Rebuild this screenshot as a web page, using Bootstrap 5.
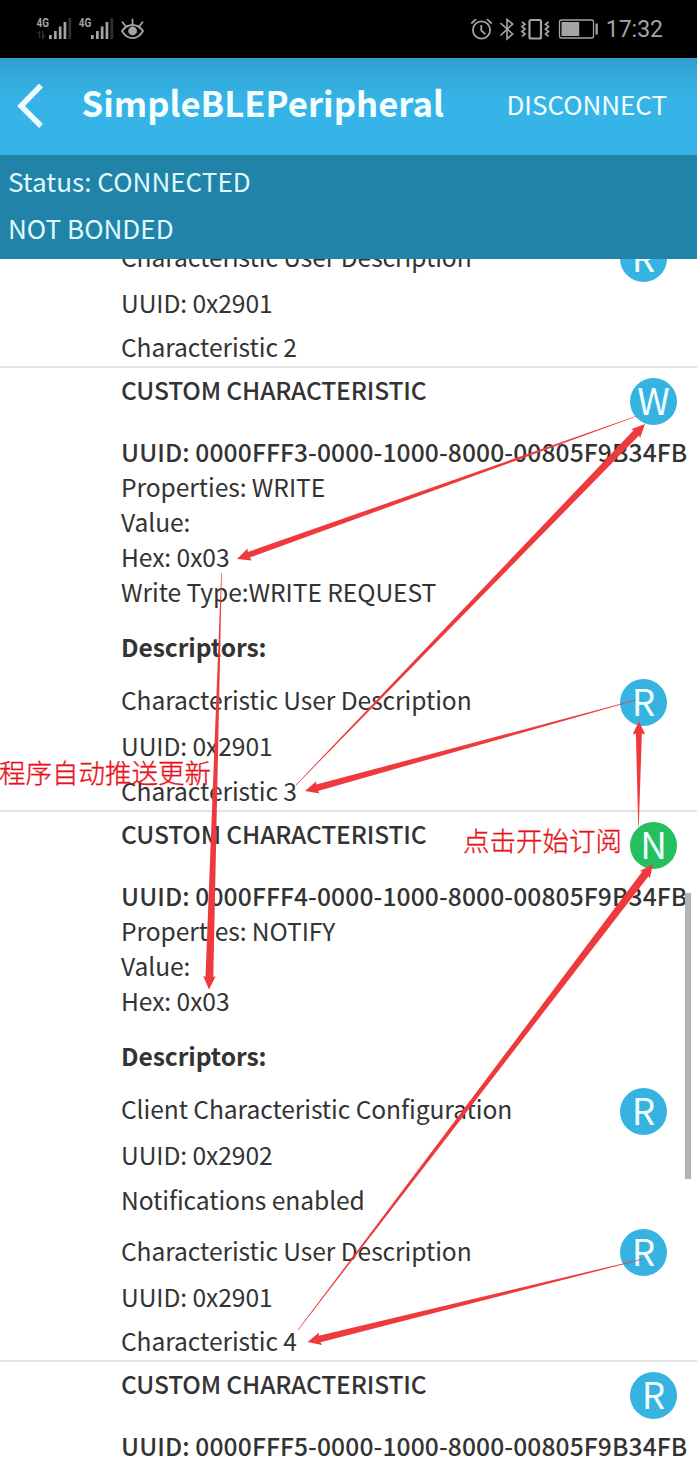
<!DOCTYPE html>
<html lang="en">
<head>
<meta charset="utf-8">
<meta name="viewport" content="width=device-width, initial-scale=1">
<title>SimpleBLEPeripheral</title>
<link href="https://cdn.jsdelivr.net/npm/bootstrap@5.3.0/dist/css/bootstrap.min.css" rel="stylesheet">
<style>
  body { font-family: "Noto Sans CJK SC", "Noto Sans", sans-serif; background: #fff; color: #333; font-size: 24.6px; line-height: 35px; }
  .screen { width: 697px; height: 1471px; }
  .sysbar { height: 57.5px; background: #000; padding: 2px 34px 0 34px; color: #a4a4a4; }
  .clock { font-family: Roboto, sans-serif; font-size: 23px; line-height: 58px; }
  .appbar { height: 97px; background: linear-gradient(#329fce, #33a9da 18%, #36b4e8 45%); color: #f4ffff; padding: 0 30px 4px 17px; }
  .app-title { font-size: 34.7px; font-weight: 700; margin-left: 38.5px; padding-bottom: 3px; }
  .app-action { font-size: 26px; padding-bottom: 2px; }
  .status-panel { height: 104.5px; background: #2283a8; color: #dffaff; padding: 3.5px 8px 0; font-size: 26.1px; line-height: 47.3px; }
  .gatt { padding-left: 121px; letter-spacing: -.07px; }
  .gatt-first { margin-top: -20.2px; }
  .section-rule { border-top: 2px solid #e2e2e2; margin-left: -121px; }
  .medium { font-weight: 500; letter-spacing: -.16px; }
  .uuid { letter-spacing: .11px; }
  .dot { width: 47px; height: 47px; border-radius: 50%; background: #36b3e0; color: #f0fdff; font-size: 37px; line-height: 42px; margin: -3.5px 30px -8.5px 0; }
  .dot-main { margin: 6px 20px -18px 0; }
  .dot-green { background: #26bf60; }
  .gap-title { margin-top: 4px; }
  .gap-uuid { margin-top: 27.3px; }
  .gap-desc { margin-top: 19.8px; }
  .gap-first { margin-top: 18.4px; }
  .gap-next { margin-top: 16.3px; }
  .gap-line { margin-top: 10.8px; }
  .gap-value { margin-top: 9.6px; }
  .section-end { height: 1.8px; }
  .overlay-note { color: #e8121a; font-size: 26.5px; line-height: 38px; font-weight: 300; -webkit-text-stroke: .35px #e8121a; }
  .note-push { left: -1px; top: 753px; }
  .note-subscribe { left: 463px; top: 821px; }
  .scroll-thumb { left: 685px; top: 893px; width: 6px; height: 286px; background: #b3b3b4; }
</style>
</head>
<body>
<div class="screen position-relative overflow-hidden d-flex flex-column">
  <div class="sysbar d-flex align-items-center justify-content-between flex-shrink-0">
    <svg width="114" height="30" viewBox="34 15 114 30" fill="#a4a4a4">
      <g font-family="Roboto, sans-serif" font-size="12.5" font-weight="700">
        <text x="36.5" y="27" textLength="12.5" lengthAdjust="spacingAndGlyphs">4G</text>
        <text x="78.7" y="27" textLength="12.5" lengthAdjust="spacingAndGlyphs">4G</text>
      </g>
      <path d="M49 35h2.7v4H49zM54 31h2.7v8H54zM58.8 26.5h2.7V39h-2.7zM63.6 22h2.7v17h-2.7z"/>
      <path d="M91 35h2.7v4H91zM96 31h2.7v8H96zM100.8 26.5h2.7V39h-2.7zM105.6 22h2.7v17h-2.7z"/>
      <path fill="#303030" d="M68.5 18h2.7v21h-2.7zM110.5 18h2.7v21h-2.7zM37 34l2.3-3 1 0v7h-1.5v-4zM42 31h1.5v4h2.3l-2.8 4h-1z"/>
      <path fill="none" stroke="#a4a4a4" stroke-width="1.8" stroke-linecap="round" d="M122 31c5.5-8 15.5-8 21 0c-5.5 9.5-15.5 9.5-21 0zM132.5 24v-4.5M125.5 26l-3-3.8M139.5 26l3-3.8"/>
      <circle cx="132.6" cy="31" r="4.4"/>
    </svg>
    <div class="d-flex align-items-center">
      <svg width="138" height="30" viewBox="468 15 138 30" fill="none" stroke="#a4a4a4" stroke-width="1.8">
        <circle cx="481.5" cy="30" r="8.6"/>
        <path d="M481.3 25v5.5l4 3.7M471.3 23.5l4.7-4.3M491.7 23.5l-4.7-4.3"/>
        <path stroke-width="1.6" d="M500.5 23l12.2 11-5.7 5V19.5l5.7 4.5-12.2 11.5"/>
        <rect x="529.5" y="20" width="11.5" height="18.5" rx="1.5" stroke-width="2.2"/>
        <path stroke-width="1.7" d="M522 22l3 2.3-3 2.4 3 2.4-3 2.4 3 2.4-3 2.5M548.5 22l-3 2.3 3 2.4-3 2.4 3 2.4-3 2.4 3 2.5"/>
        <rect x="559.5" y="20" width="34" height="18" rx="2" stroke-width="1.3"/>
        <path fill="#a4a4a4" stroke="none" d="M561.5 22h17.7v14h-17.7zM595.5 23.5h2.3v11h-2.3z"/>
      </svg>
      <span class="clock">17:32</span>
    </div>
  </div>
  <header class="appbar d-flex align-items-center flex-shrink-0">
    <svg class="mt-1" width="26" height="44" viewBox="0 0 26 44" fill="none" stroke="#effcff" stroke-width="5.5"><path d="M24 1.5L4 22l20 20"/></svg>
    <span class="app-title">SimpleBLEPeripheral</span>
    <span class="app-action ms-auto">DISCONNECT</span>
  </header>
  <div class="status-panel flex-shrink-0">
    <div>Status: CONNECTED</div>
    <div>NOT BONDED</div>
  </div>
  <main class="gatt flex-grow-1 overflow-hidden text-nowrap">
    <div class="gatt-first d-flex justify-content-between align-items-start"><span>Characteristic User Description</span><span class="dot text-center">R</span></div>
    <div class="gap-line">UUID: 0x2901</div>
    <div class="gap-value">Characteristic 2</div>
    <div class="section-end"></div>

    <div class="section-rule"></div>
    <div class="gap-title d-flex justify-content-between align-items-start medium"><span>CUSTOM CHARACTERISTIC</span><span class="dot dot-main text-center fw-normal">W</span></div>
    <div class="gap-uuid medium uuid">UUID: 0000FFF3-0000-1000-8000-00805F9B34FB</div>
    <div>Properties: WRITE</div>
    <div>Value:</div>
    <div>Hex: 0x03</div>
    <div>Write Type:WRITE REQUEST</div>
    <div class="gap-desc fw-bold">Descriptors:</div>
    <div class="gap-first d-flex justify-content-between align-items-start"><span>Characteristic User Description</span><span class="dot text-center">R</span></div>
    <div class="gap-line">UUID: 0x2901</div>
    <div class="gap-value">Characteristic 3</div>
    <div class="section-end"></div>

    <div class="section-rule"></div>
    <div class="gap-title d-flex justify-content-between align-items-start medium"><span>CUSTOM CHARACTERISTIC</span><span class="dot dot-main dot-green text-center fw-normal">N</span></div>
    <div class="gap-uuid medium uuid">UUID: 0000FFF4-0000-1000-8000-00805F9B34FB</div>
    <div>Properties: NOTIFY</div>
    <div>Value:</div>
    <div>Hex: 0x03</div>
    <div class="gap-desc fw-bold">Descriptors:</div>
    <div class="gap-first d-flex justify-content-between align-items-start"><span>Client Characteristic Configuration</span><span class="dot text-center">R</span></div>
    <div class="gap-line">UUID: 0x2902</div>
    <div class="gap-value">Notifications enabled</div>
    <div class="gap-next d-flex justify-content-between align-items-start"><span>Characteristic User Description</span><span class="dot text-center">R</span></div>
    <div class="gap-line">UUID: 0x2901</div>
    <div class="gap-value">Characteristic 4</div>
    <div class="section-end"></div>

    <div class="section-rule"></div>
    <div class="gap-title d-flex justify-content-between align-items-start medium"><span>CUSTOM CHARACTERISTIC</span><span class="dot dot-main text-center fw-normal">R</span></div>
    <div class="gap-uuid medium uuid">UUID: 0000FFF5-0000-1000-8000-00805F9B34FB</div>
  </main>

  <div class="scroll-thumb position-absolute"></div>
  <svg id="arrows" class="position-absolute top-0 start-0" width="697" height="1471" fill="#ee3a3c"></svg>
  <div class="overlay-note note-push position-absolute text-nowrap">程序自动推送更新</div>
  <div class="overlay-note note-subscribe position-absolute text-nowrap">点击开始订阅</div>
</div>
<script src="https://cdn.jsdelivr.net/npm/bootstrap@5.3.0/dist/js/bootstrap.bundle.min.js"></script>
<script>
  // Tapered arrows: tail x, tail y, tip x, tip y, shaft half-width at the head
  const arrows = [
    [637, 416, 237, 559, 3],
    [296, 785, 645, 424, 3.8],
    [636, 700, 305, 791, 3.3],
    [638.5, 826, 639, 721, 3],
    [221.5, 573, 209, 989.5, 3.9],
    [298, 1330, 653, 864, 3.9],
    [643, 1259, 307.5, 1342, 3.3]
  ];
  document.getElementById('arrows').innerHTML = arrows.map(([x0, y0, x1, y1, w]) => {
    const d = Math.hypot(x1 - x0, y1 - y0), ux = (x1 - x0) / d, uy = (y1 - y0) / d;
    const p = (back, side) => (x1 - ux * back - uy * side).toFixed(1) + ',' + (y1 - uy * back + ux * side).toFixed(1);
    return `<polygon points="${[p(d, .3), p(12.5, w), p(13.5, 6.3), p(0, 0), p(13.5, -6.3), p(12.5, -w), p(d, -.3)].join(' ')}"/>`;
  }).join('');
</script>
</body>
</html>
